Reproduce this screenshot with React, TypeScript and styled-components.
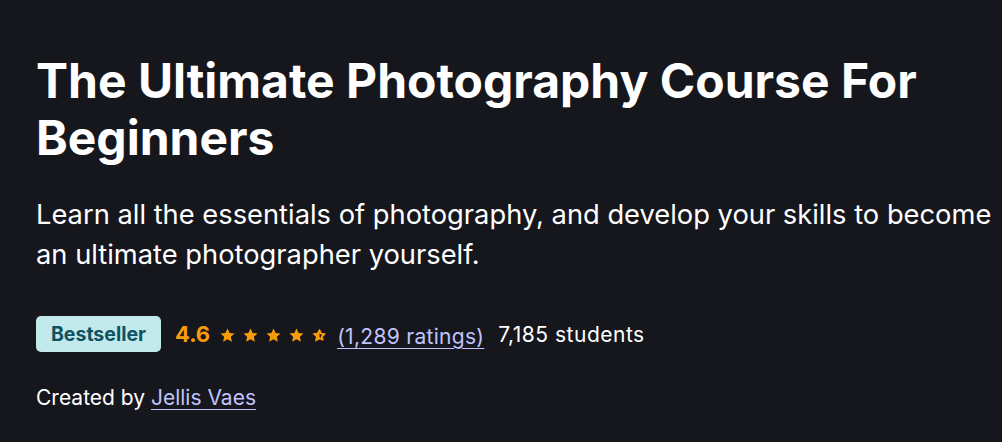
import React from "react";
import styled, { createGlobalStyle } from "styled-components";

const Global = createGlobalStyle`
  html, body { margin: 0; padding: 0; background: #16161d; }
  body { font-family: Inter, "Noto Sans", sans-serif; }
`;

const Page = styled.div`
  width: 1002px;
  height: 442px;
  box-sizing: border-box;
  padding: 52px 0 0 36px;
  background: #16161d;
  color: #ffffff;
  display: flex;
  flex-direction: column;
  overflow: hidden;
`;

const Title = styled.h1`
  margin: 0;
  font-size: 48px;
  line-height: 57px;
  font-weight: 700;
  letter-spacing: 0;
  color: #ffffff;
`;

const Subtitle = styled.p`
  margin: 29px 0 0 0;
  max-width: 962px;
  font-size: 27.3px;
  line-height: 40px;
  font-weight: 400;
  color: #ffffff;
`;

const MetaRow = styled.div`
  margin-top: 41px;
  display: flex;
  align-items: center;
  height: 36px;
`;

const Badge = styled.span`
  display: inline-flex;
  align-items: center;
  justify-content: center;
  width: 125px;
  height: 36px;
  border-radius: 5px;
  background: #c2e9eb;
  color: #0d5261;
  font-size: 19.5px;
  font-weight: 700;
  box-sizing: border-box;
`;

const Rating = styled.span`
  margin-left: 14px;
  font-size: 22px;
  font-weight: 700;
  color: #f69c08;
`;

const Stars = styled.span`
  margin-left: 10px;
  display: inline-flex;
  gap: 8px;
  align-items: center;
  position: relative;
  top: 1px;
`;

const LinkText = styled.a`
  color: #c0c4fc;
  text-decoration: underline;
  text-underline-offset: 4px;
  text-decoration-thickness: 1px;
`;

const RatingsLink = styled(LinkText)`
  margin-left: 10px;
  font-size: 21px;
  letter-spacing: 0.3px;
  position: relative;
  top: 2px;
`;

const Students = styled.span`
  margin-left: 14px;
  font-size: 21px;
  letter-spacing: 0.5px;
  color: #ffffff;
`;

const Creator = styled.div`
  margin-top: 33px;
  font-size: 21px;
  line-height: 26px;
  letter-spacing: 0;
  color: #ffffff;
`;

const STAR = "M12 0.8l3.4 7.1 7.8.9-5.8 5.3 1.6 7.7L12 17.9l-7 3.9 1.6-7.7L0.8 8.8l7.8-.9z";
const STAR_IN = "M12 4l2.4 5 5.5.6-4.1 3.8 1.1 5.4L12 16l-4.9 2.8 1.1-5.4-4.1-3.8 5.5-.6z";

const Star = ({ half }: { half?: boolean }) => (
  <svg width="15" height="15" viewBox="0 0 24 24">
    <defs>
      <clipPath id="lefthalf">
        <rect x="0" y="0" width="12" height="24" />
      </clipPath>
    </defs>
    {half ? (
      <>
        <path d={STAR_IN} fill="none" stroke="#f69c08" strokeWidth="3.2" strokeLinejoin="round" />
        <path d={STAR} fill="#f69c08" clipPath="url(#lefthalf)" />
      </>
    ) : (
      <path d={STAR} fill="#f69c08" />
    )}
  </svg>
);

export default function App() {
  return (
    <>
      <Global />
      <Page>
        <Title>The Ultimate Photography Course For Beginners</Title>
        <Subtitle>
          Learn all the essentials of photography, and develop your skills to become an ultimate
          photographer yourself.
        </Subtitle>
        <MetaRow>
          <Badge>Bestseller</Badge>
          <Rating>4.6</Rating>
          <Stars>
            <Star />
            <Star />
            <Star />
            <Star />
            <Star half />
          </Stars>
          <RatingsLink href="#">(1,289 ratings)</RatingsLink>
          <Students>7,185 students</Students>
        </MetaRow>
        <Creator>
          Created by <LinkText href="#">Jellis Vaes</LinkText>
        </Creator>
      </Page>
    </>
  );
}
